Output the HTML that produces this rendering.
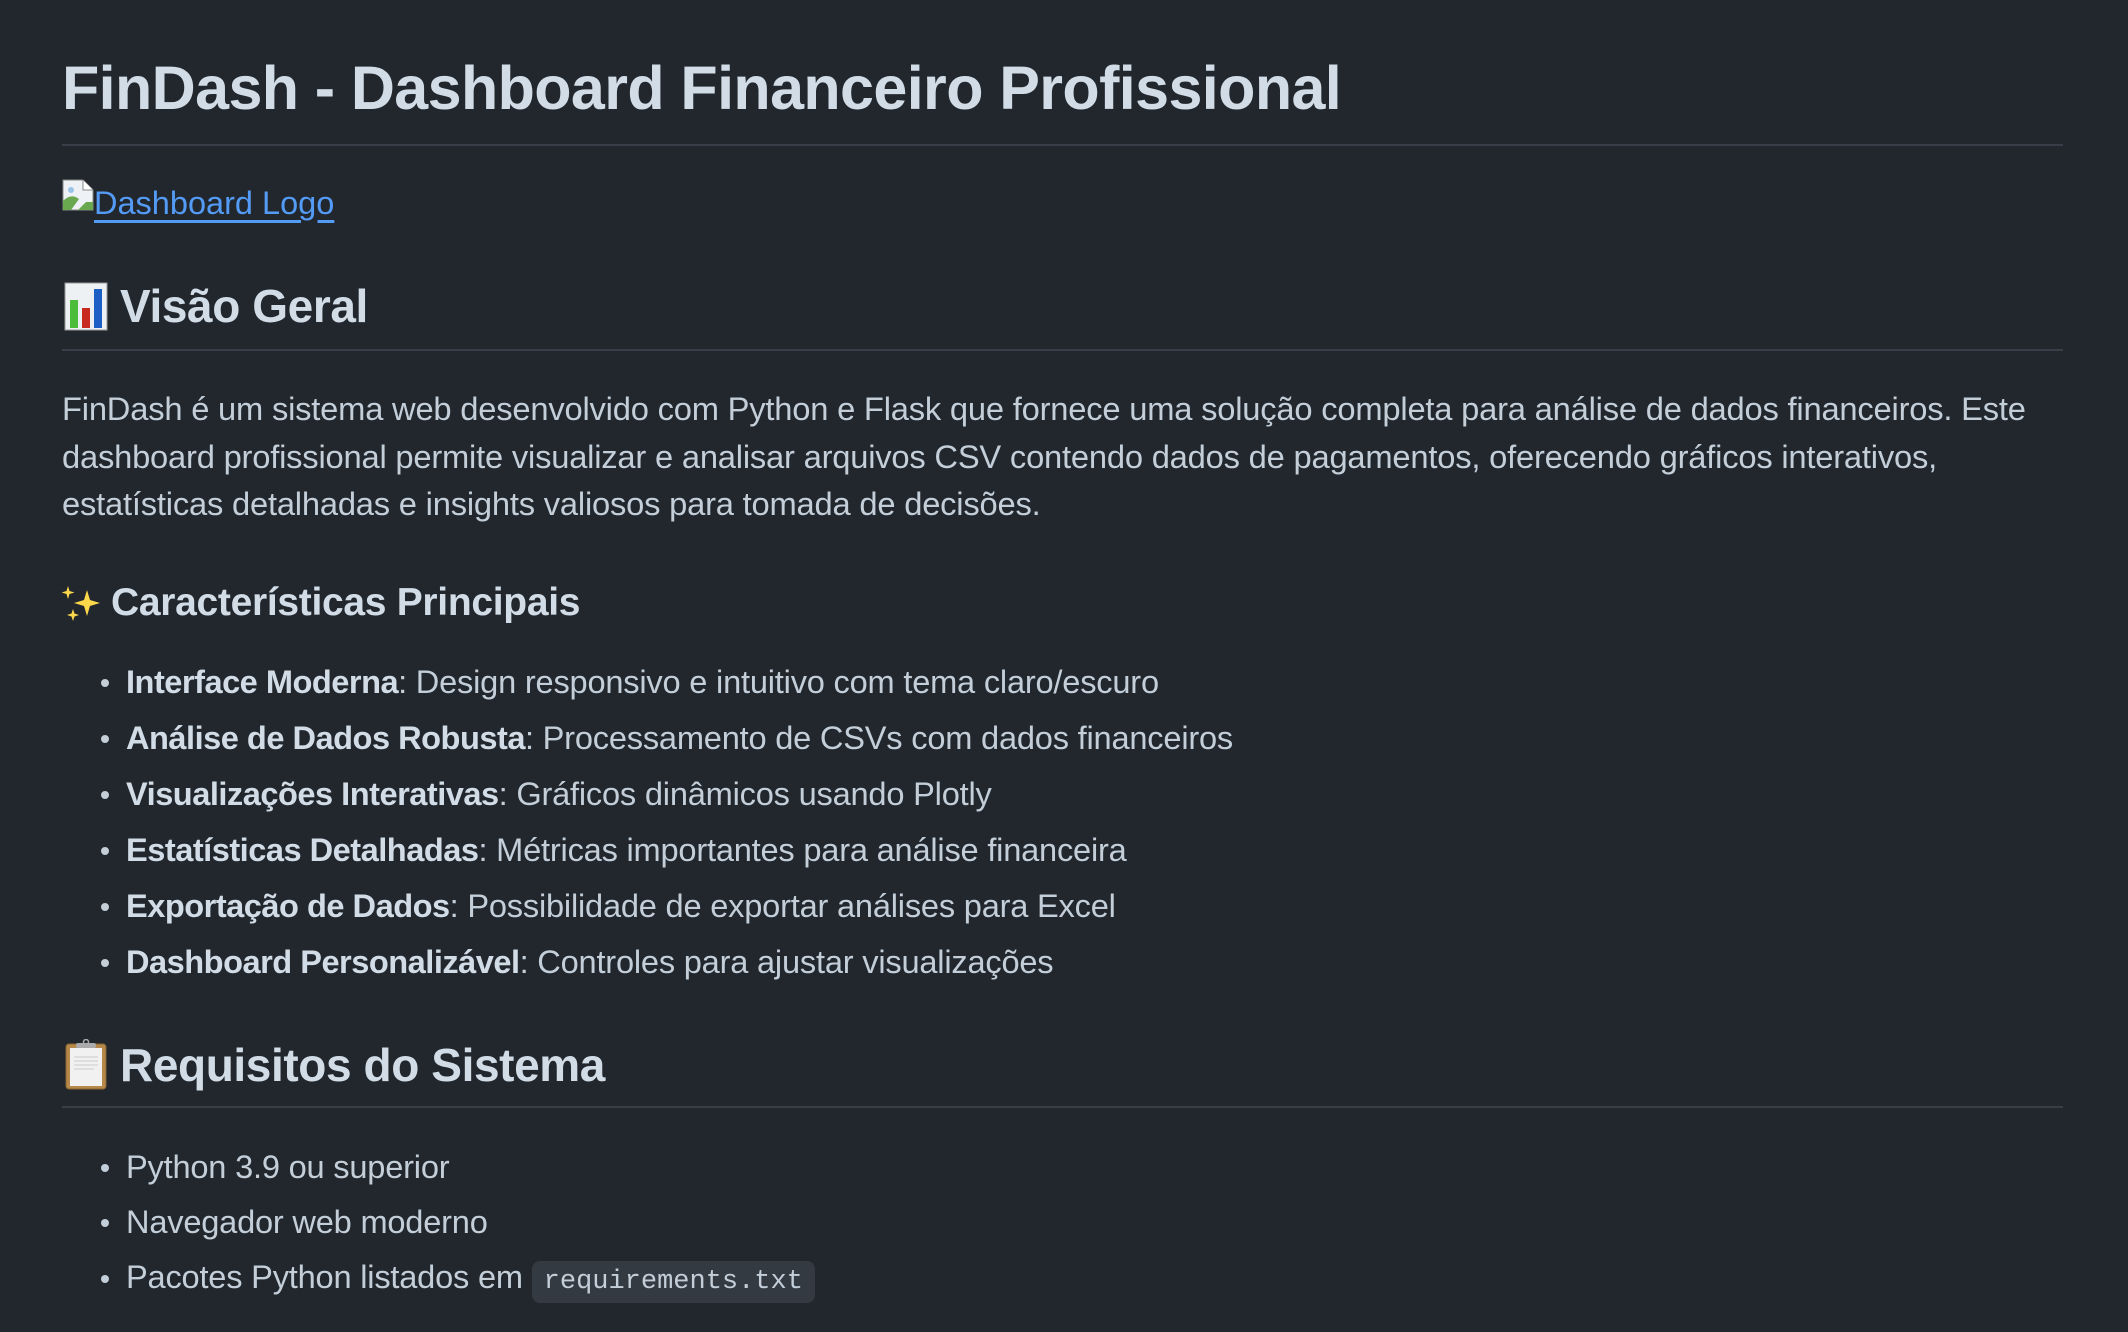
<!DOCTYPE html>
<html><head><meta charset="utf-8"><style>
html,body{margin:0;padding:0;background:#22272e;width:2128px;height:1332px;overflow:hidden;font-family:"Liberation Sans",sans-serif;color:#c3ced9}
.a{position:absolute;white-space:nowrap}
h1,h2,h3{margin:0;font-weight:600;color:#d2dce6}
.hr{position:absolute;left:62px;width:2001px;height:2px;background:#373e47}
.t{font-size:32.7px;letter-spacing:-0.2px}
b{color:#d2dce6;letter-spacing:-0.5px}
.li{position:absolute;left:126px;font-size:32.6px;white-space:nowrap;letter-spacing:-0.2px}
.li:before{content:"";position:absolute;left:-25px;top:50%;width:8px;height:8px;margin-top:-3px;border-radius:50%;background:#c3ced9}
code{font-family:"Liberation Mono",monospace;font-size:27px;background:#343a42;padding:6px 12px;border-radius:8px;color:#c3ced9;letter-spacing:0}
</style></head><body>
<div class="a" style="left:62px;top:50px;line-height:76px"><h1 style="font-size:61px;letter-spacing:-0.6px">FinDash - Dashboard Financeiro Profissional</h1></div>
<div class="hr" style="top:144px"></div>
<div class="a" style="left:62px;top:179px">
<svg width="32" height="32" viewBox="0 0 32 32" style="position:absolute;left:0;top:0"><path d="M1 1h20l10 10v20H1z" fill="#eef1f5" stroke="#888" stroke-width="1"/><path d="M21 1v10h10" fill="#fff" stroke="#888"/><path d="M1 31V22q8-8 16-2l-8 11z" fill="#6aa84f"/><circle cx="9" cy="11" r="3" fill="#9ac3e8"/><path d="M24 23l-8 8h15v-8z" fill="#6aa84f"/></svg>
<span style="position:absolute;left:32px;top:6px;font-size:32.5px;color:#539bf5;text-decoration:underline;text-underline-offset:6px">Dashboard Logo</span></div>
<div class="a" style="left:62px;top:278px;line-height:56px">
<svg width="46" height="50" viewBox="0 0 46 50" style="position:absolute;left:2px;top:4px"><rect x="1" y="1" width="42" height="47" fill="#eef1f4" stroke="#999"/><rect x="6" y="18" width="8" height="28" fill="#4cbc3b"/><rect x="18" y="26" width="8" height="20" fill="#c9281f"/><rect x="30" y="7" width="8" height="39" fill="#1e5fc6"/></svg>
<h2 style="position:absolute;left:58px;font-size:46px;letter-spacing:-0.4px">Visão Geral</h2></div>
<div class="hr" style="top:349px"></div>
<div class="a t" style="left:62px;top:385px;line-height:47.5px">FinDash é um sistema web desenvolvido com Python e Flask que fornece uma solução completa para análise de dados financeiros. Este<br>dashboard profissional permite visualizar e analisar arquivos CSV contendo dados de pagamentos, oferecendo gráficos interativos,<br>estatísticas detalhadas e insights valiosos para tomada de decisões.</div>
<div class="a" style="left:62px;top:580px;line-height:46px">
<svg width="40" height="40" viewBox="0 0 40 40" style="position:absolute;left:0;top:4px"><g fill="#fdd84a"><path d="M25 6l3 10 10 3-10 3-3 10-3-10-10-3 10-3z"/><path d="M6 2l1.5 5 5 1.5-5 1.5L6 15l-1.5-5L-0.5 8.5l5-1.5z"/><path d="M11 25l1.5 4.5 4.5 1.5-4.5 1.5L11 37l-1.5-4.5L5 31l4.5-1.5z"/></g></svg>
<h3 style="position:absolute;left:49px;font-size:39px;letter-spacing:-0.3px">Características Principais</h3></div>
<div class="li" style="top:663px"><b>Interface Moderna</b>: Design responsivo e intuitivo com tema claro/escuro</div>
<div class="li" style="top:719px"><b>Análise de Dados Robusta</b>: Processamento de CSVs com dados financeiros</div>
<div class="li" style="top:775px"><b>Visualizações Interativas</b>: Gráficos dinâmicos usando Plotly</div>
<div class="li" style="top:831px"><b>Estatísticas Detalhadas</b>: Métricas importantes para análise financeira</div>
<div class="li" style="top:887px"><b>Exportação de Dados</b>: Possibilidade de exportar análises para Excel</div>
<div class="li" style="top:943px"><b>Dashboard Personalizável</b>: Controles para ajustar visualizações</div>
<div class="a" style="left:62px;top:1037px;line-height:56px">
<svg width="46" height="52" viewBox="0 0 46 52" style="position:absolute;left:2px;top:2px"><rect x="2" y="5" width="40" height="45" rx="3" fill="#b6884a" stroke="#8a6530"/><rect x="6" y="9" width="32" height="38" fill="#f1f1f1"/><rect x="12" y="4" width="20" height="5" rx="2" fill="#aaa"/><circle cx="22" cy="3" r="2.5" fill="none" stroke="#aaa" stroke-width="1.5"/><g stroke="#ccc" stroke-width="1"><path d="M10 18h24M10 22h24M10 26h24M10 30h20"/></g></svg>
<h2 style="position:absolute;left:58px;font-size:46px;letter-spacing:-0.4px">Requisitos do Sistema</h2></div>
<div class="hr" style="top:1106px"></div>
<div class="li" style="top:1148px">Python 3.9 ou superior</div>
<div class="li" style="top:1203px">Navegador web moderno</div>
<div class="li" style="top:1258px">Pacotes Python listados em <code>requirements.txt</code></div>
</body></html>
